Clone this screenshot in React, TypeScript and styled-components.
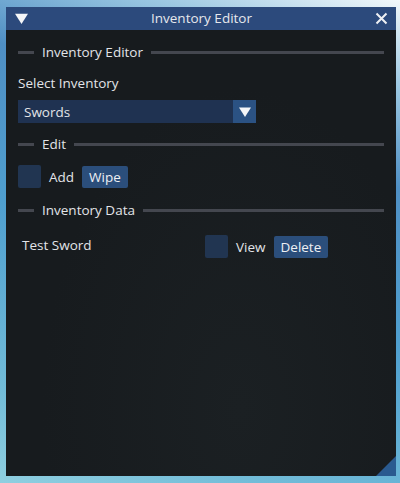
import React from "react";
import styled, { createGlobalStyle } from "styled-components";

const GlobalStyle = createGlobalStyle`
  html, body {
    margin: 0;
    padding: 0;
  }
  body {
    width: 400px;
    height: 483px;
    overflow: hidden;
    font-family: "Open Sans", "Noto Sans", sans-serif;
    background: linear-gradient(200deg, #f2f8fb 0%, #9cc8e2 14%, #4f8fc4 30%, #4f9fcf 55%, #72bcd8 85%, #8fcfe0 100%);
  }
`;

const Desktop = styled.div`
  width: 400px;
  height: 483px;
  padding: 7px 4px 7px 6px;
  box-sizing: border-box;
`;

const Window = styled.div`
  position: relative;
  width: 390px;
  height: 469px;
  display: flex;
  flex-direction: column;
  background: #171b1e;
`;

const TitleBar = styled.div`
  height: 23px;
  display: flex;
  align-items: center;
  background: #2c4a7c;
  color: #e6e8ec;
  font-size: 13.5px;
  padding: 0 8px 0 9px;
`;

const TitleText = styled.div`
  flex: 1;
  text-align: center;
  line-height: 23px;
`;

const Body = styled.div`
  flex: 1;
  padding: 12px 12px 0 12px;
  display: flex;
  flex-direction: column;
  color: #e2e4e8;
  font-size: 13.5px;
  background: radial-gradient(ellipse at 60% 85%, #1b2023 0%, #171b1e 60%);
`;

const SepRow = styled.div<{ $top?: number }>`
  display: flex;
  align-items: center;
  height: 18px;
  margin-top: ${(p) => p.$top ?? 0}px;
  gap: 8px;
`;

const SepLine = styled.div<{ $w?: number }>`
  height: 3px;
  background: #44474f;
  ${(p) => (p.$w ? `width: ${p.$w}px;` : "flex: 1;")}
`;

const SepLabel = styled.span`
  white-space: nowrap;
`;

const Label = styled.div<{ $top?: number }>`
  margin-top: ${(p) => p.$top ?? 0}px;
  height: 20px;
  line-height: 20px;
`;

const Combo = styled.div`
  margin-top: 7px;
  width: 238px;
  height: 23px;
  display: flex;
  background: #1f3251;
`;

const ComboValue = styled.div`
  flex: 1;
  padding-left: 6px;
  line-height: 24px;
`;

const ComboArrow = styled.div`
  width: 23px;
  height: 23px;
  background: #2b5283;
  display: flex;
  align-items: center;
  justify-content: center;
`;

const Row = styled.div<{ $top?: number; $left?: number }>`
  display: flex;
  align-items: center;
  height: 23px;
  margin-top: ${(p) => p.$top ?? 0}px;
  padding-left: ${(p) => p.$left ?? 0}px;
`;

const Check = styled.div`
  width: 23px;
  height: 23px;
  border-radius: 2px;
  background: #213551;
`;

const CheckLabel = styled.span`
  margin: 0 8px 0 8px;
`;

const Button = styled.div`
  height: 22px;
  padding: 0 7px;
  line-height: 22px;
  border-radius: 2px;
  background: #2b4e7b;
  color: #eef0f4;
`;

const ItemName = styled.span`
  width: 183px;
  margin-top: -4px;
`;

const Grip = styled.svg`
  position: absolute;
  right: 0;
  bottom: 0;
`;

const Triangle = ({ size = 12 }: { size?: number }) => (
  <svg width={size} height={size} viewBox="0 0 12 12">
    <polygon points="0,1.5 12,1.5 6,11" fill="#f4f6f8" />
  </svg>
);

export default function App() {
  return (
    <>
      <GlobalStyle />
      <Desktop>
        <Window>
          <TitleBar>
            <Triangle size={13} />
            <TitleText>Inventory Editor</TitleText>
            <svg width="13" height="13" viewBox="0 0 13 13">
              <path d="M1.5 1.5 L11.5 11.5 M11.5 1.5 L1.5 11.5" stroke="#eef0f4" strokeWidth="2" />
            </svg>
          </TitleBar>
          <Body>
            <SepRow $top={1}>
              <SepLine $w={16} />
              <SepLabel>Inventory Editor</SepLabel>
              <SepLine />
            </SepRow>
            <Label $top={12}>Select Inventory</Label>
            <Combo>
              <ComboValue>Swords</ComboValue>
              <ComboArrow>
                <Triangle size={12} />
              </ComboArrow>
            </Combo>
            <SepRow $top={12}>
              <SepLine $w={16} />
              <SepLabel>Edit</SepLabel>
              <SepLine />
            </SepRow>
            <Row $top={12}>
              <Check />
              <CheckLabel>Add</CheckLabel>
              <Button>Wipe</Button>
            </Row>
            <SepRow $top={13}>
              <SepLine $w={16} />
              <SepLabel>Inventory Data</SepLabel>
              <SepLine />
            </SepRow>
            <Row $top={16} $left={4}>
              <ItemName>Test Sword</ItemName>
              <Check />
              <CheckLabel>View</CheckLabel>
              <Button>Delete</Button>
            </Row>
          </Body>
          <Grip width="20" height="20" viewBox="0 0 20 20">
            <polygon points="20,0 20,20 0,20" fill="#2a5a8f" />
          </Grip>
        </Window>
      </Desktop>
    </>
  );
}
